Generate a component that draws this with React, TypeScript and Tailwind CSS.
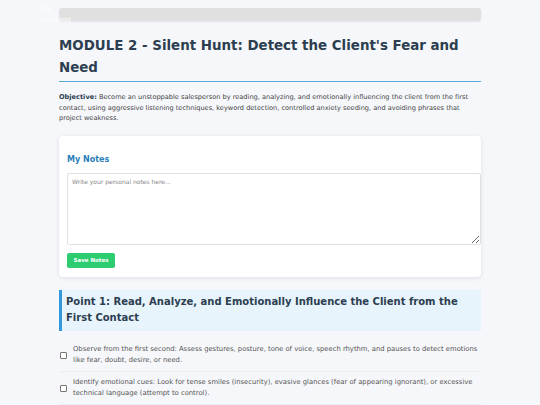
const items = [
  'Observe from the first second: Assess gestures, posture, tone of voice, speech rhythm, and pauses to detect emotions like fear, doubt, desire, or need.',
  'Identify emotional cues: Look for tense smiles (insecurity), evasive glances (fear of appearing ignorant), or excessive technical language (attempt to control).',
]

export default function App() {
  return (
    <div className="relative min-h-[405px] bg-[#f5f7fa] font-['DejaVu_Sans',sans-serif] pb-4">
      {/* progress label overlay */}
      <div className="absolute left-[40px] top-[4px] text-[6.5px] leading-[11px] text-white">
        <div>0%</div>
        <div>Complete</div>
      </div>

      <div className="mx-auto w-[422px] pt-[8px]">
        <div className="h-[13px] rounded-[3px] bg-[#e0e0e0] shadow-[0_1px_2px_rgba(0,0,0,0.08)]" />

        <h1 className="mt-[14px] border-b border-[#5aa9d6] pb-[2px] text-[13.4px] font-bold leading-[22px] text-[#2c3e50]">
          MODULE 2 - Silent Hunt: Detect the Client's Fear and Need
        </h1>

        <p className="mt-[10px] text-[6.6px] leading-[10.7px] text-[#444]">
          <strong className="text-[#2c3e50]">Objective:</strong> Become an unstoppable salesperson by reading,
          analyzing, and emotionally influencing the client from the first contact, using aggressive listening
          techniques, keyword detection, controlled anxiety seeding, and avoiding phrases that project weakness.
        </p>

        <div className="mt-[12px] rounded-[4px] bg-white px-[8px] pb-[8px] pt-[18px] shadow-[0_1px_4px_rgba(0,0,0,0.1)]">
          <h3 className="text-[8px] font-bold leading-[12px] text-[#2980b9]">My Notes</h3>
          <textarea
            placeholder="Write your personal notes here..."
            className="mt-[7px] block h-[72px] w-[414px] rounded-[2px] border border-[#e0e0e0] px-[4px] py-[3px] text-[6px] leading-[9px] text-[#333] placeholder:text-[#888] outline-none"
          />
          <button
            type="button"
            className="mt-[8px] h-[15px] w-[48px] rounded-[2px] bg-[#2ecc71] text-[5.5px] font-bold text-white"
          >
            Save Notes
          </button>
        </div>

        <div className="mt-[13px] border-l-[3px] border-[#3498db] bg-[#e8f4fc] pb-[5px] pl-[4px] pr-[6px] pt-[4px]">
          <h2 className="text-[10px] font-bold leading-[16px] text-[#2c3e50]">
            Point 1: Read, Analyze, and Emotionally Influence the Client from the First Contact
          </h2>
        </div>

        <ul className="mt-[8px]">
          {items.map((t, i) => (
            <li
              key={i}
              className="flex items-center gap-[6px] border-b border-[#eceef1] py-[5px] pl-[1px]"
            >
              <span className="h-[7px] w-[7px] shrink-0 rounded-[1px] border border-[#767676] bg-white" />
              <span className="text-[6.8px] leading-[11px] text-[#555]">{t}</span>
            </li>
          ))}
        </ul>
      </div>
    </div>
  )
}
